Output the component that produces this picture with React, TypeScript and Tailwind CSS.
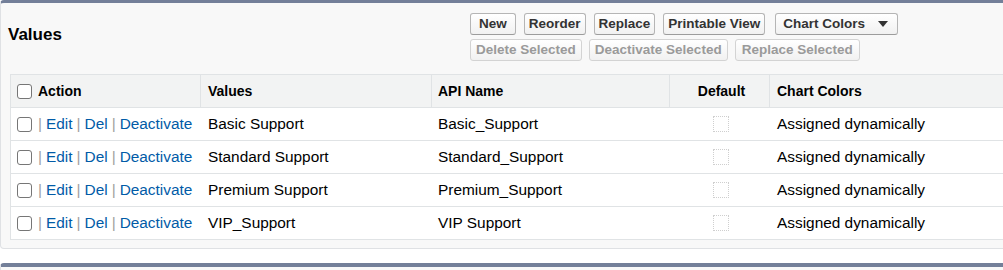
import type { ReactNode } from "react";

type Row = { label: string; api: string };

const rows: Row[] = [
  { label: "Basic Support", api: "Basic_Support" },
  { label: "Standard Support", api: "Standard_Support" },
  { label: "Premium Support", api: "Premium_Support" },
  { label: "VIP_Support", api: "VIP Support" },
];

function Checkbox() {
  return (
    <input
      type="checkbox"
      className="m-0 h-[15px] w-[15px] shrink-0 appearance-none rounded-[3px] border border-[#767676] bg-white"
    />
  );
}

function Btn({
  children,
  disabled,
  className = "",
}: {
  children: ReactNode;
  disabled?: boolean;
  className?: string;
}) {
  return (
    <button
      type="button"
      disabled={disabled}
      className={
        "flex h-[22px] items-center rounded-[3px] border bg-gradient-to-b from-white to-[#f1f1f1] text-[13.5px] font-bold leading-none " +
        (disabled
          ? "border-[#d3d3d3] text-[#9a9a9a] "
          : "border-[#b5b5b5] border-b-[#9c9c9c] text-[#333] ") +
        className
      }
    >
      {children}
    </button>
  );
}

function Sep() {
  return <span className="px-[4px] text-[#a0a0a0]">|</span>;
}

export default function App() {
  return (
    <div className="h-[270px] w-[1003px] overflow-hidden bg-white font-['Liberation_Sans',Arial,sans-serif]">
      <section className="w-[1020px] rounded-[4px] border border-[#dfe1e4] border-t-[3px] border-t-[#737f99] bg-[#f8f8f8] pb-[8px]">
        <div className="flex h-[71px]">
          <h2 className="w-[469px] pl-[7px] pt-[22px] text-[17px] font-bold leading-[20px] text-black">
            Values
          </h2>
          <div className="flex flex-col gap-[4px] pt-[10px]">
            <div className="flex gap-[8px]">
              <Btn className="px-[8px]">New</Btn>
              <Btn className="px-[4px]">Reorder</Btn>
              <Btn className="px-[4px]">Replace</Btn>
              <Btn className="px-[4px]">Printable View</Btn>
              <Btn className="ml-[2px] pl-[7px] pr-[9px]">
                Chart Colors
                <svg className="ml-[13px]" width="10" height="6" viewBox="0 0 10 6">
                  <path d="M0 0h10L5 6z" fill="#333" />
                </svg>
              </Btn>
            </div>
            <div className="flex gap-[7px]">
              <Btn disabled className="px-[5px]">Delete Selected</Btn>
              <Btn disabled className="px-[5px]">Deactivate Selected</Btn>
              <Btn disabled className="px-[6px]">Replace Selected</Btn>
            </div>
          </div>
        </div>

        <div className="ml-[9px] border border-b-0 border-[#e0e3e5] bg-white text-[15.4px] text-black">
          <div className="flex h-[33px] border-b border-[#e0e3e5] bg-[#f2f3f3] text-[14px] font-bold">
            <div className="flex w-[190px] items-center gap-[6px] border-r border-[#e0e3e5] pl-[6px]">
              <Checkbox />
              Action
            </div>
            <div className="flex w-[231px] items-center border-r border-[#e0e3e5] pl-[7px]">Values</div>
            <div className="flex w-[238px] items-center border-r border-[#e0e3e5] pl-[6px]">API Name</div>
            <div className="flex w-[100px] items-center justify-center border-r border-[#e0e3e5] pl-[4px]">
              Default
            </div>
            <div className="flex flex-1 items-center pl-[7px]">Chart Colors</div>
          </div>

          {rows.map((r) => (
            <div key={r.label} className="flex h-[33px] border-b border-[#e0e3e5]">
              <div className="flex w-[190px] items-center pl-[6px]">
                <Checkbox />
                <span className="ml-[2px] whitespace-nowrap">
                  <Sep />
                  <a href="#" className="text-[#015ba7]">Edit</a>
                  <Sep />
                  <a href="#" className="text-[#015ba7]">Del</a>
                  <Sep />
                  <a href="#" className="text-[#015ba7]">Deactivate</a>
                </span>
              </div>
              <div className="flex w-[231px] items-center pl-[7px]">{r.label}</div>
              <div className="flex w-[238px] items-center pl-[6px]">{r.api}</div>
              <div className="flex w-[100px] items-center justify-center pl-[2px]">
                <span className="h-[16px] w-[16px] border border-dotted border-[#cfcfcf]" />
              </div>
              <div className="flex flex-1 items-center pl-[7px]">Assigned dynamically</div>
            </div>
          ))}
        </div>
      </section>

      <div className="mt-[14px] h-[30px] w-[1020px] rounded-t-[4px] border border-[#dfe1e4] border-t-[4px] border-t-[#737f99] bg-[#f8f8f8]" />
    </div>
  );
}
